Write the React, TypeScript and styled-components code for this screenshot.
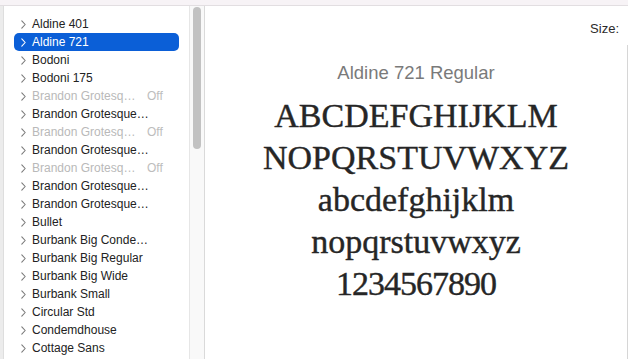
import React from "react";
import styled, { createGlobalStyle } from "styled-components";

const Global = createGlobalStyle`
  *, *::before, *::after { box-sizing: border-box; }
  html, body { margin: 0; padding: 0; background: #ffffff; }
  body { width: 628px; height: 359px; overflow: hidden; font-family: "Liberation Sans", Arial, sans-serif; }
  #root { width: 628px; height: 359px; }
`;

const Window = styled.div`
  width: 628px;
  height: 359px;
  display: flex;
  flex-direction: column;
  overflow: hidden;
  background: #fff;
`;

const TopStrip = styled.div`
  height: 6px;
  flex: none;
  background: #f7f3f6;
  border-bottom: 1px solid #e2dee1;
`;

const Body = styled.div`
  flex: 1;
  display: flex;
  min-height: 0;
`;

const EdgeStrip = styled.div`
  width: 4px;
  flex: none;
  background: #ececec;
  border-right: 1px solid #dedede;
`;

const Sidebar = styled.div`
  width: 185px;
  flex: none;
  padding-top: 9px;
  display: flex;
  flex-direction: column;
  overflow: hidden;
`;

const Row = styled.div<{ $selected?: boolean; $off?: boolean }>`
  height: 18px;
  flex: none;
  margin: 0 10px 0 10px;
  padding-left: 7px;
  border-radius: 5px;
  display: flex;
  align-items: center;
  font-size: 12px;
  white-space: nowrap;
  color: ${(p) => (p.$selected ? "#ffffff" : p.$off ? "#b9b9b9" : "#222222")};
  background: ${(p) => (p.$selected ? "#0b5fd7" : "transparent")};
`;

const Chevron = styled.svg`
  width: 5px;
  height: 9px;
  flex: none;
  margin-right: 6px;
`;

const Label = styled.span`
  min-width: 115px;
  flex: none;
`;

const OffTag = styled.span`
  color: #bdbdbd;
`;

const ScrollTrack = styled.div`
  width: 16px;
  flex: none;
  background: #f9f9f9;
  border-left: 1px solid #e6e6e6;
  border-right: 1px solid #dadada;
  padding: 1px 3px 0 3px;
`;

const ScrollThumb = styled.div`
  height: 142px;
  border-radius: 4px;
  background: #c2c2c2;
`;

const Main = styled.div`
  flex: 1;
  display: flex;
  min-width: 0;
`;

const Preview = styled.div`
  flex: 1;
  display: flex;
  flex-direction: column;
  align-items: center;
`;

const SizeLabel = styled.div`
  align-self: flex-end;
  margin-top: 15px;
  margin-right: 8px;
  font-size: 13px;
  color: #2b2b2b;
  height: 16px;
`;

const Title = styled.div`
  margin-top: 25px;
  font-size: 18.5px;
  color: #7a7a7a;
  line-height: 22px;
`;

const SampleLine = styled.div<{ $spacing: number }>`
  font-family: "Liberation Serif", "Times New Roman", serif;
  font-size: 34px;
  line-height: 42px;
  color: #262626;
  white-space: nowrap;
  -webkit-text-stroke: 0.4px #262626;
  letter-spacing: ${(p) => p.$spacing}px;
`;

const Samples = styled.div`
  margin-top: 11px;
  display: flex;
  flex-direction: column;
  align-items: center;
`;

const SizeRail = styled.div`
  width: 1px;
  flex: none;
  margin-top: 39px;
  background: #d6d6d6;
`;

type Font = { name: string; off?: boolean; selected?: boolean };

const fonts: Font[] = [
  { name: "Aldine 401" },
  { name: "Aldine 721", selected: true },
  { name: "Bodoni" },
  { name: "Bodoni 175" },
  { name: "Brandon Grotesq…", off: true },
  { name: "Brandon Grotesque…" },
  { name: "Brandon Grotesq…", off: true },
  { name: "Brandon Grotesque…" },
  { name: "Brandon Grotesq…", off: true },
  { name: "Brandon Grotesque…" },
  { name: "Brandon Grotesque…" },
  { name: "Bullet" },
  { name: "Burbank Big Conde…" },
  { name: "Burbank Big Regular" },
  { name: "Burbank Big Wide" },
  { name: "Burbank Small" },
  { name: "Circular Std" },
  { name: "Condemdhouse" },
  { name: "Cottage Sans" },
];

const samples: { text: string; spacing: number }[] = [
  { text: "ABCDEFGHIJKLM", spacing: 0 },
  { text: "NOPQRSTUVWXYZ", spacing: 0 },
  { text: "abcdefghijklm", spacing: 0 },
  { text: "nopqrstuvwxyz", spacing: 0 },
  { text: "1234567890", spacing: -1 },
];

export default function App() {
  return (
    <Window>
      <Global />
      <TopStrip />
      <Body>
        <EdgeStrip />
        <Sidebar>
          {fonts.map((f, i) => (
            <Row key={i} $selected={f.selected} $off={f.off}>
              <Chevron viewBox="0 0 5 9">
                <path
                  d="M0.8 0.8 L4.2 4.5 L0.8 8.2"
                  fill="none"
                  stroke={f.selected ? "#ffffff" : "#7a7a7a"}
                  strokeWidth="1.1"
                  strokeLinecap="round"
                  strokeLinejoin="round"
                />
              </Chevron>
              <Label>{f.name}</Label>
              {f.off && <OffTag>Off</OffTag>}
            </Row>
          ))}
        </Sidebar>
        <ScrollTrack>
          <ScrollThumb />
        </ScrollTrack>
        <Main>
          <Preview>
            <SizeLabel>Size:</SizeLabel>
            <Title>Aldine 721 Regular</Title>
            <Samples>
              {samples.map((s) => (
                <SampleLine key={s.text} $spacing={s.spacing}>
                  {s.text}
                </SampleLine>
              ))}
            </Samples>
          </Preview>
          <SizeRail />
        </Main>
      </Body>
    </Window>
  );
}
